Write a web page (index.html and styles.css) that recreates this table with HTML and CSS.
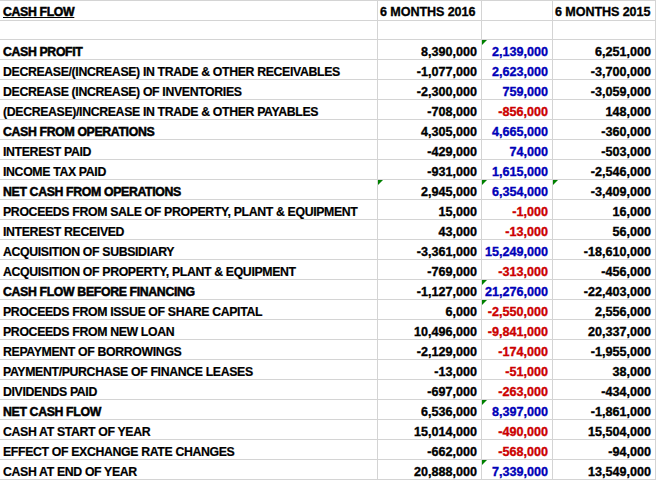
FILE: index.html
```html
<!DOCTYPE html>
<html>
<head>
<meta charset="utf-8">
<link rel="stylesheet" href="styles.css">
</head>
<body>
<div class="sheet">
  <div class="c lbl first ul heavy">CASH FLOW</div><div class="c hdr first">6 MONTHS 2016</div><div class="c first"></div><div class="c hdr first">6 MONTHS 2015</div>
  <div class="c lbl"></div><div class="c"></div><div class="c"></div><div class="c"></div>

  <div class="c lbl heavy">CASH PROFIT</div><div class="c n">8,390,000</div><div class="c n b tri">2,139,000</div><div class="c n">6,251,000</div>
  <div class="c lbl">DECREASE/(INCREASE) IN TRADE &amp; OTHER RECEIVABLES</div><div class="c n">-1,077,000</div><div class="c n b">2,623,000</div><div class="c n">-3,700,000</div>
  <div class="c lbl">DECREASE (INCREASE) OF INVENTORIES</div><div class="c n">-2,300,000</div><div class="c n b">759,000</div><div class="c n">-3,059,000</div>
  <div class="c lbl">(DECREASE)/INCREASE IN TRADE &amp; OTHER PAYABLES</div><div class="c n">-708,000</div><div class="c n r">-856,000</div><div class="c n">148,000</div>
  <div class="c lbl heavy">CASH FROM OPERATIONS</div><div class="c n">4,305,000</div><div class="c n b">4,665,000</div><div class="c n">-360,000</div>
  <div class="c lbl">INTEREST PAID</div><div class="c n">-429,000</div><div class="c n b">74,000</div><div class="c n">-503,000</div>
  <div class="c lbl">INCOME TAX PAID</div><div class="c n">-931,000</div><div class="c n b">1,615,000</div><div class="c n">-2,546,000</div>
  <div class="c lbl heavy">NET CASH FROM OPERATIONS</div><div class="c n tri">2,945,000</div><div class="c n b tri">6,354,000</div><div class="c n tri">-3,409,000</div>
  <div class="c lbl">PROCEEDS FROM SALE OF PROPERTY, PLANT &amp; EQUIPMENT</div><div class="c n">15,000</div><div class="c n r">-1,000</div><div class="c n">16,000</div>
  <div class="c lbl">INTEREST RECEIVED</div><div class="c n">43,000</div><div class="c n r">-13,000</div><div class="c n">56,000</div>
  <div class="c lbl">ACQUISITION OF SUBSIDIARY</div><div class="c n">-3,361,000</div><div class="c n b">15,249,000</div><div class="c n">-18,610,000</div>
  <div class="c lbl">ACQUISITION OF PROPERTY, PLANT &amp; EQUIPMENT</div><div class="c n">-769,000</div><div class="c n r">-313,000</div><div class="c n">-456,000</div>
  <div class="c lbl heavy">CASH FLOW BEFORE FINANCING</div><div class="c n">-1,127,000</div><div class="c n b tri">21,276,000</div><div class="c n">-22,403,000</div>
  <div class="c lbl">PROCEEDS FROM ISSUE OF SHARE CAPITAL</div><div class="c n">6,000</div><div class="c n r tri">-2,550,000</div><div class="c n">2,556,000</div>
  <div class="c lbl">PROCEEDS FROM NEW LOAN</div><div class="c n">10,496,000</div><div class="c n r">-9,841,000</div><div class="c n">20,337,000</div>
  <div class="c lbl">REPAYMENT OF BORROWINGS</div><div class="c n">-2,129,000</div><div class="c n r">-174,000</div><div class="c n">-1,955,000</div>
  <div class="c lbl">PAYMENT/PURCHASE OF FINANCE LEASES</div><div class="c n">-13,000</div><div class="c n r">-51,000</div><div class="c n">38,000</div>
  <div class="c lbl">DIVIDENDS PAID</div><div class="c n">-697,000</div><div class="c n r">-263,000</div><div class="c n">-434,000</div>
  <div class="c lbl heavy">NET CASH FLOW</div><div class="c n">6,536,000</div><div class="c n b tri">8,397,000</div><div class="c n">-1,861,000</div>
  <div class="c lbl">CASH AT START OF YEAR</div><div class="c n">15,014,000</div><div class="c n r">-490,000</div><div class="c n">15,504,000</div>
  <div class="c lbl">EFFECT OF EXCHANGE RATE CHANGES</div><div class="c n">-662,000</div><div class="c n r">-568,000</div><div class="c n">-94,000</div>
  <div class="c lbl">CASH AT END OF YEAR</div><div class="c n">20,888,000</div><div class="c n b tri">7,339,000</div><div class="c n">13,549,000</div>
</div>
</body>
</html>
```

FILE: styles.css
```css
html, body {
  margin: 0;
  padding: 0;
  background: #ffffff;
}

.sheet {
  display: grid;
  grid-template-columns: 378px 104px 71px 103px;
  grid-auto-rows: 20px;
  font-family: "Liberation Sans", Arial, sans-serif;
  font-weight: bold;
  color: #000000;
}

.c {
  position: relative;
  box-sizing: border-box;
  height: 20px;
  border-right: 1px solid #d4d4d4;
  border-bottom: 1px solid #d4d4d4;
  padding: 5px 3px 0 3px;
  line-height: 14px;
  white-space: nowrap;
  overflow: visible;
  font-size: 12px;
}

.c.first {
  height: 21px;
  border-top: 1px solid #d4d4d4;
  padding-top: 4px;
}

.lbl {
  padding-left: 3px;
  font-size: 12.3px;
  letter-spacing: -0.35px;
  -webkit-text-stroke: 0.2px #000000;
}

.ul {
  text-decoration: underline;
  text-underline-offset: 1px;
}

.lbl.heavy {
  -webkit-text-stroke: 0.5px #000000;
}

.hdr {
  font-size: 12.6px;
  padding-left: 2px;
  letter-spacing: -0.1px;
  -webkit-text-stroke: 0.3px #000000;
}

.n {
  text-align: right;
  font-size: 12.6px;
  padding-right: 4px;
  -webkit-text-stroke: 0.35px currentColor;
}

.b {
  color: #0000b8;
}

.r {
  color: #cc0000;
}

.tri::before {
  content: "";
  position: absolute;
  left: 0;
  top: 0;
  width: 0;
  height: 0;
  border-top: 5px solid #008000;
  border-right: 5px solid transparent;
}
```
